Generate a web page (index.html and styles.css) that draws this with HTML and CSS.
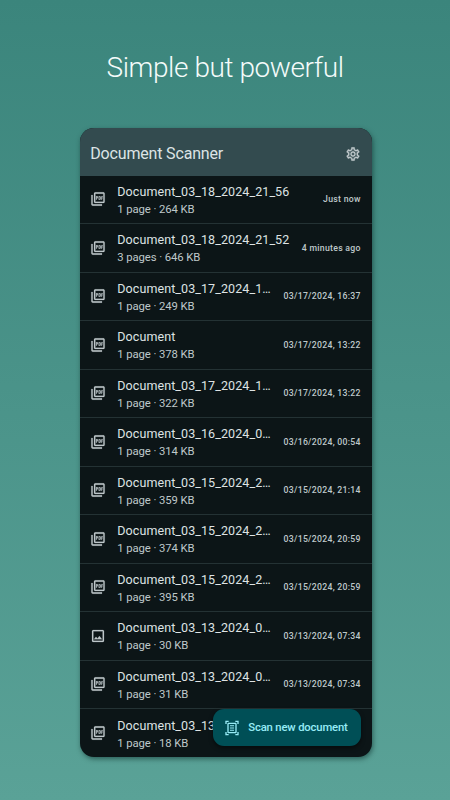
FILE: index.html
```
<!DOCTYPE html>
<html lang="en">
<head>
<meta charset="utf-8">
<title>Document Scanner</title>
<link rel="stylesheet" href="styles.css">
</head>
<body>
<svg class="defs" width="0" height="0">
  <symbol id="pdf" viewBox="0 0 24 24"><path d="M20 2H8c-1.1 0-2 .9-2 2v12c0 1.1.9 2 2 2h12c1.1 0 2-.9 2-2V4c0-1.1-.9-2-2-2zm0 14H8V4h12v12zM4 6H2v14c0 1.1.9 2 2 2h14v-2H4V6zm12 6V9c0-.55-.45-1-1-1h-2v5h2c.55 0 1-.45 1-1zm-2-3h1v3h-1V9zm4 2h1v-1h-1V9h1V8h-2v5h1zm-8 0h1c.55 0 1-.45 1-1V9c0-.55-.45-1-1-1H9v5h1v-2zm0-2h1v1h-1V9z"/></symbol>
  <symbol id="image" viewBox="0 0 24 24"><path d="M19 5v14H5V5h14m0-2H5c-1.1 0-2 .9-2 2v14c0 1.1.9 2 2 2h14c1.1 0 2-.9 2-2V5c0-1.1-.9-2-2-2zm-4.86 8.86l-3 3.87L9 13.14 6 17h12l-3.86-5.14z"/></symbol>
</svg>
<h1 class="headline">Simple but powerful</h1>
<main class="phone">
  <header class="bar">
    <span class="bar-title">Document Scanner</span>
    <svg class="icon" viewBox="0 0 24 24"><path d="M19.43 12.98c.04-.32.07-.64.07-.98 0-.34-.03-.66-.07-.98l2.11-1.65c.19-.15.24-.42.12-.64l-2-3.46c-.09-.16-.26-.25-.44-.25-.06 0-.12.01-.17.03l-2.49 1c-.52-.4-1.08-.73-1.69-.98l-.38-2.65C14.46 2.18 14.25 2 14 2h-4c-.25 0-.46.18-.49.42l-.38 2.65c-.61.25-1.17.59-1.69.98l-2.49-1c-.06-.02-.12-.03-.18-.03-.17 0-.34.09-.43.25l-2 3.46c-.13.22-.07.49.12.64l2.11 1.65c-.04.32-.07.65-.07.98 0 .33.03.66.07.98l-2.11 1.65c-.19.15-.24.42-.12.64l2 3.46c.09.16.26.25.44.25.06 0 .12-.01.17-.03l2.49-1c.52.4 1.08.73 1.69.98l.38 2.65c.03.24.24.42.49.42h4c.25 0 .46-.18.49-.42l.38-2.65c.61-.25 1.17-.59 1.69-.98l2.49 1c.06.02.12.03.18.03.17 0 .34-.09.43-.25l2-3.46c.12-.22.07-.49-.12-.64l-2.11-1.65zm-1.98-1.71c.04.31.05.52.05.73 0 .21-.02.43-.05.73l-.14 1.13.89.7 1.08.84-.7 1.21-1.27-.51-1.04-.42-.9.68c-.43.32-.84.56-1.25.73l-1.06.43-.16 1.13-.2 1.35h-1.4l-.19-1.35-.16-1.13-1.06-.43c-.43-.18-.83-.41-1.23-.71l-.91-.7-1.06.43-1.27.51-.7-1.21 1.08-.84.89-.7-.14-1.13c-.03-.31-.05-.54-.05-.74s.02-.43.05-.73l.14-1.13-.89-.7-1.08-.84.7-1.21 1.27.51 1.04.42.9-.68c.43-.32.84-.56 1.25-.73l1.06-.43.16-1.13.2-1.35h1.39l.19 1.35.16 1.13 1.06.43c.43.18.83.41 1.23.71l.91.7 1.06-.43 1.27-.51.7 1.21-1.07.85-.89.7.14 1.13zM12 8c-2.21 0-4 1.79-4 4s1.79 4 4 4 4-1.79 4-4-1.79-4-4-4zm0 6c-1.1 0-2-.9-2-2s.9-2 2-2 2 .9 2 2-.9 2-2 2z"/></svg>
  </header>
  <ul class="list">
    <li class="row"><svg class="icon"><use href="#pdf"/></svg><div class="text"><div class="name">Document_03_18_2024_21_56</div><div class="meta">1 page · 264 KB</div></div><time class="time">Just now</time></li>
    <li class="row"><svg class="icon"><use href="#pdf"/></svg><div class="text"><div class="name">Document_03_18_2024_21_52</div><div class="meta">3 pages · 646 KB</div></div><time class="time">4 minutes ago</time></li>
    <li class="row"><svg class="icon"><use href="#pdf"/></svg><div class="text"><div class="name">Document_03_17_2024_1…</div><div class="meta">1 page · 249 KB</div></div><time class="time">03/17/2024, 16:37</time></li>
    <li class="row"><svg class="icon"><use href="#pdf"/></svg><div class="text"><div class="name">Document</div><div class="meta">1 page · 378 KB</div></div><time class="time">03/17/2024, 13:22</time></li>
    <li class="row"><svg class="icon"><use href="#pdf"/></svg><div class="text"><div class="name">Document_03_17_2024_1…</div><div class="meta">1 page · 322 KB</div></div><time class="time">03/17/2024, 13:22</time></li>
    <li class="row"><svg class="icon"><use href="#pdf"/></svg><div class="text"><div class="name">Document_03_16_2024_0…</div><div class="meta">1 page · 314 KB</div></div><time class="time">03/16/2024, 00:54</time></li>
    <li class="row"><svg class="icon"><use href="#pdf"/></svg><div class="text"><div class="name">Document_03_15_2024_2…</div><div class="meta">1 page · 359 KB</div></div><time class="time">03/15/2024, 21:14</time></li>
    <li class="row"><svg class="icon"><use href="#pdf"/></svg><div class="text"><div class="name">Document_03_15_2024_2…</div><div class="meta">1 page · 374 KB</div></div><time class="time">03/15/2024, 20:59</time></li>
    <li class="row"><svg class="icon"><use href="#pdf"/></svg><div class="text"><div class="name">Document_03_15_2024_2…</div><div class="meta">1 page · 395 KB</div></div><time class="time">03/15/2024, 20:59</time></li>
    <li class="row"><svg class="icon"><use href="#image"/></svg><div class="text"><div class="name">Document_03_13_2024_0…</div><div class="meta">1 page · 30 KB</div></div><time class="time">03/13/2024, 07:34</time></li>
    <li class="row"><svg class="icon"><use href="#pdf"/></svg><div class="text"><div class="name">Document_03_13_2024_0…</div><div class="meta">1 page · 31 KB</div></div><time class="time">03/13/2024, 07:34</time></li>
    <li class="row"><svg class="icon"><use href="#pdf"/></svg><div class="text"><div class="name">Document_03_13</div><div class="meta">1 page · 18 KB</div></div></li>
  </ul>
  <button class="fab">
    <svg class="icon" viewBox="0 0 24 24"><path d="M7 3H4v3H2V1h5v2zm15 3V1h-5v2h3v3h2zM7 21H4v-3H2v5h5v-2zm13-3v3h-3v2h5v-5h-2zM17 6H7v12h10V6zm2 12c0 1.1-.9 2-2 2H7c-1.1 0-2-.9-2-2V6c0-1.1.9-2 2-2h10c1.1 0 2 .9 2 2v12zM15 8H9v1.500h6V8zm0 3.250H9v1.500h6v-1.500zm0 3.250H9V16h6v-1.500z"/></svg>
    <span>Scan new document</span>
  </button>
</main>
</body>
</html>
```
FILE: styles.css
```
* { box-sizing: border-box; }
body {
  margin: 0;
  height: 800px;
  overflow: hidden;
  background: linear-gradient(#3b857c, #5aa297);
  font-family: Roboto, sans-serif;
  display: flex;
  flex-direction: column;
  align-items: center;
}
.defs { position: absolute; }
.headline {
  margin: 49px 0 0;
  height: 78.5px;
  font-size: 28px;
  line-height: 37px;
  font-weight: 300;
  letter-spacing: -.42px;
  color: #f4fbfa;
  white-space: nowrap;
}
.phone {
  position: relative;
  width: 292px;
  height: 629.5px;
  margin-left: 1.5px;
  border-radius: 14px;
  overflow: hidden;
  background: #0c1517;
  box-shadow: 1px 2px 5px rgba(0, 30, 28, .5);
}
.bar {
  display: flex;
  align-items: center;
  justify-content: space-between;
  height: 48px;
  padding: 4px 10.5px 0 10.5px;
  background: #334b4f;
  color: #dce4e5;
}
.bar-title { font-size: 16px; line-height: 20px; letter-spacing: -.17px; }
.icon {
  width: 16px;
  height: 16px;
  flex: none;
  fill: #bfc8ca;
}
.row .icon, .bar .icon { stroke: #bfc8ca; stroke-width: .3px; }
.list { margin: 0; padding: 0; list-style: none; }
.row {
  display: flex;
  align-items: center;
  height: 48.5px;
  padding: 0 11px 0 10.5px;
  border-bottom: 1px solid #243234;
}
.row:last-child { border-bottom: 0; }
.text {
  flex: 1;
  margin-left: 11px;
  padding-top: 2px;
  white-space: nowrap;
}
.name {
  font-size: 12.5px;
  line-height: 17px;
  letter-spacing: .09px;
  color: #dee3e4;
}
.meta {
  margin-top: 1px;
  font-size: 11.3px;
  line-height: 17px;
  letter-spacing: -.08px;
  color: #bfc8ca;
}
.time {
  font-size: 8.7px;
  font-weight: 500;
  letter-spacing: .28px;
  color: #bfc8ca;
  white-space: nowrap;
}
.fab {
  position: absolute;
  right: 10.5px;
  bottom: 11px;
  width: 148px;
  height: 37.5px;
  display: flex;
  align-items: center;
  gap: 8px;
  padding: 1px 0 0 11px;
  border: 0;
  border-radius: 11px;
  background: #004f56;
  color: #97ecf6;
  font: 500 11.3px/16px Roboto, sans-serif;
  letter-spacing: -.17px;
  white-space: nowrap;
  box-shadow: 0 2px 4px rgba(0, 0, 0, .5);
}
.fab .icon { fill: #97ecf6; }
```
